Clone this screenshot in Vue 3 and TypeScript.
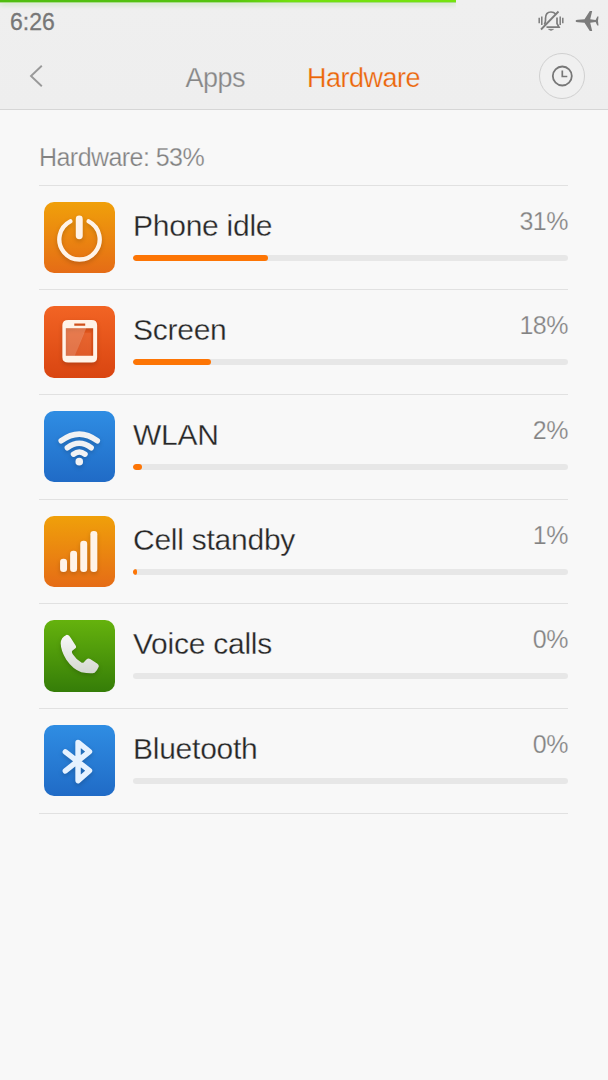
<script setup lang="ts">
type IconName = 'power' | 'screen' | 'wifi' | 'signal' | 'phone' | 'bluetooth'

interface HardwareItem {
  name: string
  percent: number
  icon: IconName
  tint: 'orange' | 'red' | 'blue' | 'green'
}

const items: HardwareItem[] = [
  { name: 'Phone idle', percent: 31, icon: 'power', tint: 'orange' },
  { name: 'Screen', percent: 18, icon: 'screen', tint: 'red' },
  { name: 'WLAN', percent: 2, icon: 'wifi', tint: 'blue' },
  { name: 'Cell standby', percent: 1, icon: 'signal', tint: 'orange' },
  { name: 'Voice calls', percent: 0, icon: 'phone', tint: 'green' },
  { name: 'Bluetooth', percent: 0, icon: 'bluetooth', tint: 'blue' },
]
</script>

<template>
  <div class="page">
    <header class="top">
      <div class="battery"><div class="battery-level"></div></div>
      <div class="status">
        <span class="time">6:26</span>
        <svg class="bell" width="26" height="22" viewBox="0 0 26 22" fill="none" stroke="#7c7c7c">
          <path d="M1.2 7.8v5.5M3.8 6.5v8.5M22.2 6.5v8.5M24.8 7.8v5.5" stroke-width="1.5" />
          <path d="M6.3 14.5Q7.5 13 7.5 10V8.5C7.5 4.2 9.6 2 13 2C15 2 16.5 2.7 17.6 4M19 7.5V13.5L21 17.2H8.5" stroke-width="1.7" />
          <path d="M20.5 1.5L3 19.5" stroke-width="1.8" />
          <path d="M10.5 19.3Q13 21.5 15.5 19.3z" fill="#7c7c7c" stroke-width=".6" />
        </svg>
        <svg class="plane" width="24" height="22" viewBox="0 0 24 22" fill="#7c7c7c">
          <path d="M.5 11Q.8 9.8 3 9.7L9.5 9.3L14.8 1H17.2L15.2 9.2L20.6 9.9L22.3 6.5H23.5L23 11L23.5 15.5H22.3L20.6 12.1L15.2 12.8L17.2 21H14.8L9.5 12.7L3 12.3Q.8 12.2.5 11Z" />
        </svg>
      </div>
      <nav class="nav">
        <svg class="back" width="16" height="24" viewBox="0 0 16 24" fill="none" stroke="#999" stroke-width="1.9">
          <path d="M12.800 1.700L2 12L12.800 22.300" />
        </svg>
        <span class="tab apps">Apps</span>
        <span class="tab active">Hardware</span>
        <button class="history" type="button" aria-label="History">
          <svg width="22" height="22" viewBox="0 0 22 22" fill="none" stroke="#777">
            <circle cx="11.3" cy="11" r="9.500" stroke-width="1.800" />
            <path d="M11.3 5.500V11.500H16.3" stroke-width="1.700" />
          </svg>
        </button>
      </nav>
    </header>

    <main class="content">
      <h1 class="summary">Hardware: 53%</h1>
      <ul class="list">
        <li v-for="item in items" :key="item.name" class="row">
          <div class="icon" :class="item.tint">
            <svg v-if="item.icon === 'power'" class="glyph" viewBox="0.5 0 72 72" fill="none" stroke="#fff3e8" stroke-linecap="round">
              <path d="M27 19.500A20.300 20.300 0 1 0 45.500 19.500" stroke-width="4.400" />
              <path d="M36 17V34" stroke-width="7" />
            </svg>
            <svg v-else-if="item.icon === 'screen'" class="glyph" viewBox="0.5 0 72 72">
              <path fill="#fff3e8" fill-rule="evenodd" d="M25 14H48.500Q54 14 54 19.500V51.500Q54 57 48.500 57H25Q19 57 19 51.500V19.500Q19 14 25 14ZM22.500 22.500V50H50V22.500ZM31 17.500V20H42V17.500Z" />
              <path fill="#fff" opacity=".22" d="M22.500 22.500H43L31.500 50H22.500Z" />
              <path fill="#fff" opacity=".08" d="M40.500 27H48V50H31.500Z" />
            </svg>
            <svg v-else-if="item.icon === 'wifi'" class="glyph" viewBox="0.5 0 72 72" fill="none" stroke="#f1f2f4" stroke-linecap="round">
              <path d="M17.800 30Q36 16.500 54.200 30" stroke-width="5.500" />
              <path d="M24 37Q36 28 48 37" stroke-width="5.500" />
              <path d="M30.200 43.500Q36 39.200 41.800 43.500" stroke-width="5.500" />
              <circle cx="36" cy="51" r="3.800" fill="#f1f2f4" stroke="none" />
            </svg>
            <svg v-else-if="item.icon === 'signal'" class="glyph" viewBox="0.5 0 72 72" fill="#fff3e8">
              <rect x="16.700" y="43" width="7" height="13.500" rx="3.300" />
              <rect x="26.800" y="35" width="7" height="21.500" rx="3.300" />
              <rect x="37" y="25" width="7" height="31.500" rx="3.300" />
              <rect x="47.200" y="15" width="7" height="41.500" rx="3.300" />
            </svg>
            <svg v-else-if="item.icon === 'phone'" class="glyph" viewBox="0.5 0 72 72">
              <defs>
                <linearGradient id="handset" x1="0" y1="0" x2="0" y2="1">
                  <stop offset="0" stop-color="#f7f7f7" />
                  <stop offset="1" stop-color="#d4d8d1" />
                </linearGradient>
              </defs>
              <path fill="url(#handset)" d="M23 15Q25.500 14.500 27.500 18L32.500 26Q33.500 28 31.500 29L29 31Q28 32.500 29.500 34.500Q33 40 38.500 43Q40.500 43.500 41.500 41.500L43.500 39.500Q45 38.300 47 39.300L54 43.700Q56.500 45.500 55.300 47.500Q54 51 51.500 53Q48 54.500 38 52.500Q29.500 49.500 23 40Q17.500 31.500 17.300 23.500Q17.500 17.500 23 15Z" />
            </svg>
            <svg v-else class="glyph" viewBox="0.5 0 72 72" fill="none" stroke="#e6f2ff" stroke-width="5.500" stroke-linecap="round" stroke-linejoin="round">
              <path d="M22 27L46.300 46L34.800 56V17.500L46.300 26.800L22 46.300" />
            </svg>
          </div>
          <div class="details">
            <div class="labels">
              <span class="name">{{ item.name }}</span>
              <span class="percent">{{ item.percent }}%</span>
            </div>
            <div class="track">
              <div class="fill" :style="{ width: item.percent + '%' }"></div>
            </div>
          </div>
        </li>
      </ul>
    </main>
  </div>
</template>

<style>
html,
body {
  margin: 0;
  background: #f8f8f8;
}
</style>

<style scoped>
.page {
  width: 608px;
  height: 1080px;
  overflow: hidden;
  background: #f8f8f8;
  font-family: "Liberation Sans", Arial, sans-serif;
}
.top {
  box-sizing: border-box;
  height: 110px;
  background: linear-gradient(#efefef, #eeeeee);
  border-bottom: 1px solid #d6d6d6;
}
.battery {
  height: 2px;
}
.battery-level {
  width: 456px;
  height: 2px;
  background: linear-gradient(90deg, #4fbd10 0, #55c40f 230px, #72e00c 290px, #74e30d 100%);
  box-shadow: 0 1px 0 #a9dc8a, 0 3px 4px rgba(110, 210, 70, 0.35);
  clip-path: inset(0 0 -8px 0);
}
.status {
  display: flex;
  align-items: center;
  height: 38px;
  padding: 0 9px 0 10px;
}
.time {
  flex: 1;
  padding-top: 2px;
  font-size: 23px;
  line-height: 38px;
  color: #777;
  -webkit-text-stroke: 0.3px #777;
}
.bell {
  margin-right: 11px;
  margin-left: -1px;
}
.nav {
  display: flex;
  align-items: center;
  height: 72px;
  padding: 0 23px 0 29px;
}
.tab {
  padding-top: 3px;
  font-size: 27px;
  line-height: 30px;
  letter-spacing: -0.5px;
  color: #868686;
  -webkit-text-stroke: 0.25px #eeeeee;
}
.apps {
  margin-left: 140.5px;
  margin-right: 62px;
}
.active {
  color: #ec6508;
}
.history {
  display: flex;
  align-items: center;
  justify-content: center;
  box-sizing: border-box;
  width: 46px;
  height: 46px;
  margin-left: auto;
  padding: 0;
  border: 1px solid #d0d0d0;
  border-radius: 50%;
  background: #f0f0f0;
}
.content {
  padding: 0 40px 0 39px;
}
.summary {
  box-sizing: border-box;
  height: 74.6px;
  margin: 0;
  padding-top: 32px;
  font-size: 25px;
  font-weight: 400;
  line-height: 30px;
  letter-spacing: -0.55px;
  color: #828282;
  -webkit-text-stroke: 0.25px #f8f8f8;
}
.list {
  margin: 0;
  padding: 0;
  list-style: none;
  border-top: 1px solid #e1e1e1;
}
.row {
  display: flex;
  box-sizing: border-box;
  height: 104.67px;
  padding: 16px 0 0 4.5px;
  border-bottom: 1px solid #e1e1e1;
}
.icon {
  width: 71.5px;
  height: 71.5px;
  margin-right: 18px;
  border-radius: 10px;
}
.orange {
  background: linear-gradient(#f0a00a, #e56c16);
}
.red {
  background: linear-gradient(#f26424, #d94511);
}
.blue {
  background: linear-gradient(#2f8de3, #206bc6);
}
.green {
  background: linear-gradient(#65b20d, #357d08);
}
.glyph {
  display: block;
  width: 100%;
  height: 100%;
  filter: drop-shadow(0 2px 2px rgba(0, 0, 0, 0.18));
}
.details {
  flex: 1;
}
.labels {
  display: flex;
  justify-content: space-between;
  height: 53px;
}
.name {
  padding-top: 7px;
  font-size: 30px;
  line-height: 34px;
  letter-spacing: -0.25px;
  color: #262626;
  -webkit-text-stroke: 0.3px #f8f8f8;
}
.percent {
  padding-top: 4px;
  font-size: 25px;
  line-height: 30px;
  letter-spacing: -0.5px;
  color: #828282;
  -webkit-text-stroke: 0.25px #f8f8f8;
}
.track {
  height: 6px;
  border-radius: 3px;
  background: #e7e7e7;
  overflow: hidden;
}
.fill {
  height: 100%;
  border-radius: 3px;
  background: #fd7505;
}
</style>
